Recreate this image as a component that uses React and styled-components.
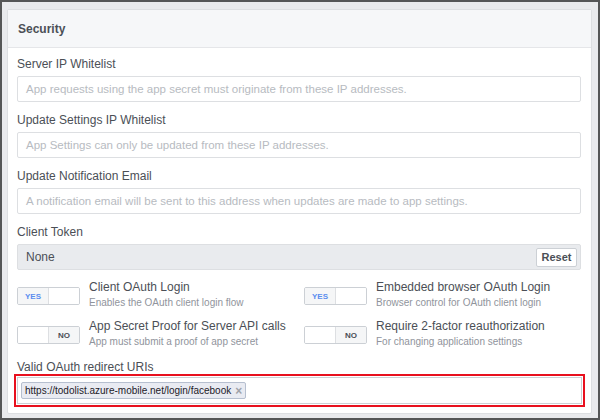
import React from "react";
import styled, { createGlobalStyle } from "styled-components";

const GlobalStyle = createGlobalStyle`
  html, body {
    margin: 0;
    padding: 0;
    background: #e9eaed;
  }
  * {
    box-sizing: border-box;
  }
`;

const fields = [
  { label: "Server IP Whitelist", placeholder: "App requests using the app secret must originate from these IP addresses." },
  { label: "Update Settings IP Whitelist", placeholder: "App Settings can only be updated from these IP addresses." },
  { label: "Update Notification Email", placeholder: "A notification email will be sent to this address when updates are made to app settings." }
];

const toggles = [
  { on: true, title: "Client OAuth Login", sub: "Enables the OAuth client login flow" },
  { on: true, title: "Embedded browser OAuth Login", sub: "Browser control for OAuth client login" },
  { on: false, title: "App Secret Proof for Server API calls", sub: "App must submit a proof of app secret" },
  { on: false, title: "Require 2-factor reauthorization", sub: "For changing application settings" }
];

function Toggle({ on }) {
  return (
    <Switch>
      <Half $active={on}>{on ? "YES" : ""}</Half>
      <Half $active={!on} $right>{on ? "" : "NO"}</Half>
    </Switch>
  );
}

function App() {
  return (
    <Frame>
      <GlobalStyle />
      <Card>
        <Header>Security</Header>
        <Body>
          {fields.map((field) => (
            <Field key={field.label}>
              <Label>{field.label}</Label>
              <Input>{field.placeholder}</Input>
            </Field>
          ))}

          <Field>
            <Label>Client Token</Label>
            <TokenBox>
              <span>None</span>
              <ResetButton>Reset</ResetButton>
            </TokenBox>
          </Field>

          <ToggleGrid>
            {toggles.map((t) => (
              <ToggleRow key={t.title}>
                <Toggle on={t.on} />
                <ToggleText>
                  <ToggleTitle>{t.title}</ToggleTitle>
                  <ToggleSub>{t.sub}</ToggleSub>
                </ToggleText>
              </ToggleRow>
            ))}
          </ToggleGrid>

          <Label>Valid OAuth redirect URIs</Label>
          <Highlight>
            <TagInput>
              <Tag>
                https://todolist.azure-mobile.net/login/facebook
                <Remove>×</Remove>
              </Tag>
            </TagInput>
          </Highlight>
        </Body>
      </Card>
    </Frame>
  );
}

const Frame = styled.div`
  width: 600px;
  height: 420px;
  border: 2px solid #555657;
  background: #e9eaed;
  padding: 7px 6px 4px 5px;
  font-family: "Liberation Sans", Arial, sans-serif;
  overflow: hidden;
`;

const Card = styled.div`
  background: #fff;
  border: 1px solid #dddfe2;
  border-radius: 2px;
  height: 405px;
`;

const Header = styled.div`
  height: 38px;
  display: flex;
  align-items: center;
  padding-left: 10px;
  background: #f6f7f9;
  border-bottom: 1px solid #e5e6e9;
  font-size: 12px;
  font-weight: bold;
  color: #4b4f56;
`;

const Body = styled.div`
  padding: 8px 10px 0 9px;
`;

const Field = styled.div`
  margin-bottom: 10px;
`;

const Label = styled.div`
  font-size: 12px;
  line-height: 16px;
  color: #4b4f56;
  margin-bottom: 4px;
`;

const Input = styled.div`
  height: 26px;
  border: 1px solid #dddfe2;
  border-radius: 2px;
  padding: 0 8px;
  display: flex;
  align-items: center;
  font-size: 11.5px;
  color: #b7bbc1;
  white-space: nowrap;
  overflow: hidden;
`;

const TokenBox = styled.div`
  height: 26px;
  background: #e9ebee;
  border: 1px solid #dddfe2;
  border-radius: 2px;
  padding: 0 3px 0 8px;
  display: flex;
  align-items: center;
  justify-content: space-between;
  font-size: 12px;
  color: #4b4f56;
`;

const ResetButton = styled.button`
  height: 19px;
  width: 41px;
  padding: 0;
  background: #fff;
  border: 1px solid #ccd0d5;
  border-radius: 2px;
  font-family: inherit;
  font-size: 11px;
  font-weight: bold;
  color: #4b4f56;
`;

const ToggleGrid = styled.div`
  display: grid;
  grid-template-columns: 287px 1fr;
  row-gap: 9px;
  margin-bottom: 10px;
`;

const ToggleRow = styled.div`
  display: flex;
  align-items: flex-start;
  height: 30px;
`;

const Switch = styled.div`
  display: flex;
  width: 63px;
  height: 18px;
  margin-top: 7px;
  margin-right: 9px;
  border: 1px solid #ccd0d5;
  border-radius: 2px;
  overflow: hidden;
  flex-shrink: 0;
`;

const Half = styled.div`
  flex: 1;
  display: flex;
  align-items: center;
  justify-content: center;
  font-size: 8px;
  font-weight: bold;
  background: ${(p) => (p.$active ? "#f5f6f7" : "#fff")};
  color: ${(p) => (p.$right ? "#4b4f56" : "#5b8def")};
  border-left: ${(p) => (p.$right ? "1px solid #dddfe2" : "none")};
`;

const ToggleText = styled.div`
  display: flex;
  flex-direction: column;
`;

const ToggleTitle = styled.div`
  font-size: 12px;
  line-height: 15px;
  color: #4b4f56;
`;

const ToggleSub = styled.div`
  font-size: 10px;
  line-height: 15px;
  color: #90949c;
`;

const Highlight = styled.div`
  margin: -5px -4px 0 -3px;
  padding: 1px;
  border: 2px solid #e8101e;
`;

const TagInput = styled.div`
  height: 27px;
  border: 1px solid #ccd0d5;
  padding: 4px 3px;
  display: flex;
  align-items: flex-start;
`;

const Tag = styled.div`
  height: 17px;
  display: flex;
  align-items: center;
  gap: 4px;
  padding: 0 3px 0 3px;
  background: #e9ebf2;
  border: 1px solid #b6bfcf;
  border-radius: 2px;
  font-size: 10px;
  color: #1d2129;
`;

const Remove = styled.span`
  font-size: 12px;
  color: #9ea2a9;
  font-weight: bold;
`;

export default App;
